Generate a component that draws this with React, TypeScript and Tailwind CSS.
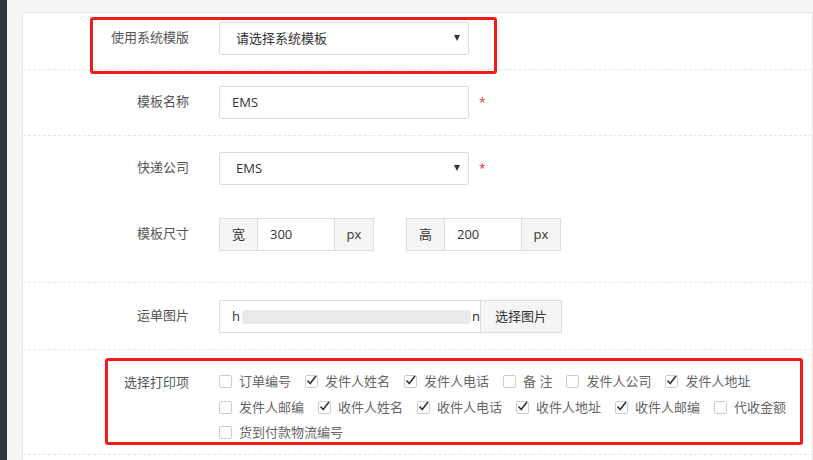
import React from "react";

const F = { fontFamily: '"Open Sans","Noto Sans CJK SC",sans-serif' };

function Row({ h, label, children, border = true }: { h: string; label: string; children: React.ReactNode; border?: boolean }) {
  return (
    <div className={`flex items-start ${h} ${border ? "border-b border-dashed border-[#e5e5e5]" : ""}`}>
      <div className="w-[166px] shrink-0 text-right text-[13px] text-[#555] pr-0 pt-[6px]">{label}</div>
      <div className="ml-[30px] flex items-center">{children}</div>
    </div>
  );
}

const Caret = () => <span className="absolute right-[8px] top-[12px] w-0 h-0 border-l-[3.5px] border-r-[3.5px] border-t-[6px] border-l-transparent border-r-transparent border-t-[#333]" />;

function Cb({ c, t }: { c?: boolean; t: string }) {
  return (
    <span className="flex items-center mr-[14px]">
      <span className="w-[13px] h-[13px] border border-[#ccc] rounded-[2px] bg-white relative mr-[7px]">
        {c && (
          <svg viewBox="0 0 13 13" className="absolute -left-px -top-[2px] w-[13px] h-[13px]"><path d="M2.5 6.5 L5.2 9.5 L11 2" stroke="#333" strokeWidth="1.6" fill="none" /></svg>
        )}
      </span>
      <span>{t}</span>
    </span>
  );
}

export default function App() {
  return (
    <div className="w-[813px] h-[460px] bg-[#f5f5f5] relative overflow-hidden flex" style={F}>
      <div className="w-[7px] bg-[#2a3542]" />
      <div className="flex-1 pl-[15px] pt-[12px]">
        <div className="bg-white border border-[#e7e7e7] h-[460px] pt-[9px] relative">
          <Row h="h-[48px]" label="使用系统模版">
            <div className="relative w-[250px] h-[33px] border border-[#ddd] rounded-[2px] text-[13px] text-[#333] pl-[16px] flex items-center">请选择系统模板<Caret /></div>
          </Row>
          <Row h="h-[66px] pt-[16px]" label="模板名称">
            <div className="w-[250px] h-[33px] border border-[#ddd] rounded-[2px] text-[13px] text-[#333] pl-[12px] flex items-center">EMS</div>
            <span className="ml-[10px] text-[#e33] text-[12px]">*</span>
          </Row>
          <Row h="h-[82px] pt-[16px]" label="快递公司" border={false}>
            <div className="relative w-[250px] h-[33px] border border-[#ddd] rounded-[2px] text-[13px] text-[#333] pl-[16px] flex items-center">EMS<Caret /></div>
            <span className="ml-[10px] text-[#e33] text-[12px]">*</span>
          </Row>
          <Row h="h-[65px]" label="模板尺寸">
            {[["宽", "300"], ["高", "200"]].map(([a, v], i) => (
              <div key={a} className={`flex h-[33px] text-[13px] text-[#333] ${i ? "ml-[32px]" : ""}`}>
                <span className="w-[39px] border border-[#ddd] bg-[#f5f5f5] flex items-center justify-center">{a}</span>
                <span className="w-[76px] border-y border-[#ddd] flex items-center pl-[12px]">{v}</span>
                <span className="w-[40px] border border-[#ddd] bg-[#f5f5f5] flex items-center justify-center">px</span>
              </div>
            ))}
          </Row>
          <Row h="h-[67px] pt-[17px]" label="运单图片">
            <div className="flex h-[33px] text-[13px] text-[#333]">
              <span className="w-[262px] border border-[#ddd] flex items-center pl-[12px] relative">h<span className="ml-[2px] h-[14px] w-[235px] bg-[#e4e4e4] rounded-[4px] opacity-80" /><span className="ml-[1px]">n</span></span>
              <span className="w-[81px] border border-l-0 border-[#ddd] bg-[#f5f5f5] flex items-center justify-center">选择图片</span>
            </div>
          </Row>
          <div className="flex h-[105px] border-b border-dashed border-[#e5e5e5] pt-[22px]">
            <div className="w-[166px] shrink-0 text-right text-[13px] text-[#555] pt-[1px]">选择打印项</div>
            <div className="ml-[30px] text-[13px] text-[#666] flex flex-col gap-[6px]">
              <div className="flex"><Cb t="订单编号" /><Cb c t="发件人姓名" /><Cb c t="发件人电话" /><Cb t="备 注" /><Cb t="发件人公司" /><Cb c t="发件人地址" /></div>
              <div className="flex"><Cb t="发件人邮编" /><Cb c t="收件人姓名" /><Cb c t="收件人电话" /><Cb c t="收件人地址" /><Cb c t="收件人邮编" /><Cb t="代收金额" /></div>
              <div className="flex"><Cb t="货到付款物流编号" /></div>
            </div>
          </div>
        </div>
      </div>
      <div className="absolute left-[90px] top-[17px] w-[407px] h-[57px] border-[3px] border-[#f21b1b] rounded-[3px]" />
      <div className="absolute left-[105px] top-[358px] w-[698px] h-[87px] border-[3px] border-[#f21b1b] rounded-[3px]" />
    </div>
  );
}
